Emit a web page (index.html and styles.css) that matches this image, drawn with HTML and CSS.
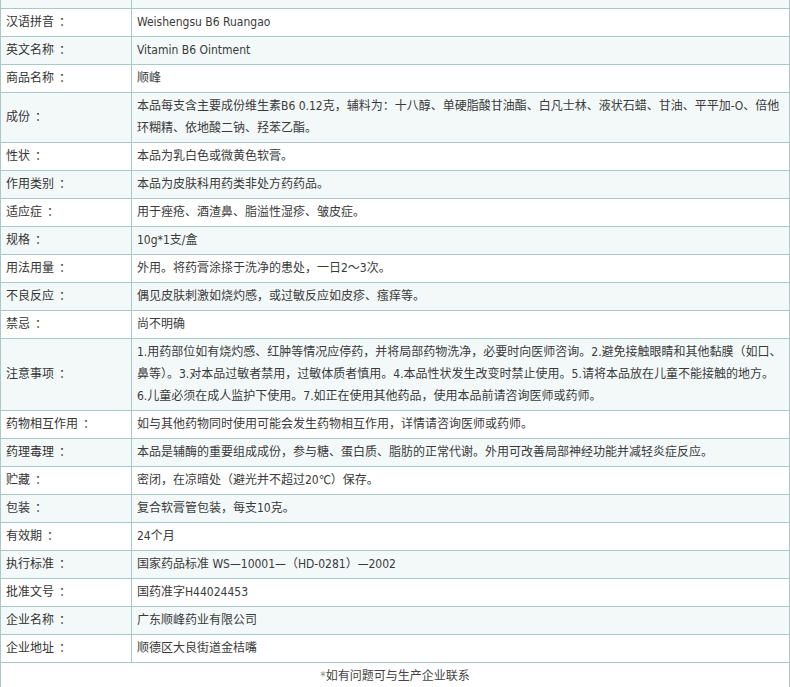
FILE: index.html
```html
<!DOCTYPE html>
<html lang="zh-CN">
<head>
<meta charset="utf-8">
<title>维生素B6软膏 说明书</title>
<link rel="stylesheet" href="styles.css">
</head>
<body>
<table class="spec">
  <colgroup><col class="col-label"><col class="col-value"></colgroup>
  <tbody>
    <tr class="alt"><td class="label">通用名称<span class="colon">：</span></td><td class="value">维生素B6软膏</td></tr>
    <tr><td class="label">汉语拼音<span class="colon">：</span></td><td class="value">Weishengsu B6 Ruangao</td></tr>
    <tr class="alt"><td class="label">英文名称<span class="colon">：</span></td><td class="value">Vitamin B6 Ointment</td></tr>
    <tr><td class="label">商品名称<span class="colon">：</span></td><td class="value">顺峰</td></tr>
    <tr class="alt"><td class="label">成份<span class="colon">：</span></td><td class="value">本品每支含主要成份维生素B6 0.12克，辅料为：十八醇、单硬脂酸甘油酯、白凡士林、液状石蜡、甘油、平平加-O、倍他<br>环糊精、依地酸二钠、羟苯乙酯。</td></tr>
    <tr><td class="label">性状<span class="colon">：</span></td><td class="value">本品为乳白色或微黄色软膏。</td></tr>
    <tr class="alt"><td class="label">作用类别<span class="colon">：</span></td><td class="value">本品为皮肤科用药类非处方药药品。</td></tr>
    <tr><td class="label">适应症<span class="colon">：</span></td><td class="value">用于痤疮、酒渣鼻、脂溢性湿疹、皱皮症。</td></tr>
    <tr class="alt"><td class="label">规格<span class="colon">：</span></td><td class="value">10g*1支/盒</td></tr>
    <tr><td class="label">用法用量<span class="colon">：</span></td><td class="value">外用。将药膏涂搽于洗净的患处，一日2～3次。</td></tr>
    <tr class="alt"><td class="label">不良反应<span class="colon">：</span></td><td class="value">偶见皮肤刺激如烧灼感，或过敏反应如皮疹、瘙痒等。</td></tr>
    <tr><td class="label">禁忌<span class="colon">：</span></td><td class="value">尚不明确</td></tr>
    <tr class="alt"><td class="label">注意事项<span class="colon">：</span></td><td class="value">1.用药部位如有烧灼感、红肿等情况应停药，并将局部药物洗净，必要时向医师咨询。2.避免接触眼睛和其他黏膜（如口、<br>鼻等）。3.对本品过敏者禁用，过敏体质者慎用。4.本品性状发生改变时禁止使用。5.请将本品放在儿童不能接触的地方。<br>6.儿童必须在成人监护下使用。7.如正在使用其他药品，使用本品前请咨询医师或药师。</td></tr>
    <tr><td class="label">药物相互作用<span class="colon">：</span></td><td class="value">如与其他药物同时使用可能会发生药物相互作用，详情请咨询医师或药师。</td></tr>
    <tr class="alt"><td class="label">药理毒理<span class="colon">：</span></td><td class="value">本品是辅酶的重要组成成份，参与糖、蛋白质、脂肪的正常代谢。外用可改善局部神经功能并减轻炎症反应。</td></tr>
    <tr><td class="label">贮藏<span class="colon">：</span></td><td class="value">密闭，在凉暗处（避光并不超过20℃）保存。</td></tr>
    <tr class="alt"><td class="label">包装<span class="colon">：</span></td><td class="value">复合软膏管包装，每支10克。</td></tr>
    <tr><td class="label">有效期<span class="colon">：</span></td><td class="value">24个月</td></tr>
    <tr class="alt"><td class="label">执行标准<span class="colon">：</span></td><td class="value">国家药品标准 WS—10001—（HD-0281）—2002</td></tr>
    <tr><td class="label">批准文号<span class="colon">：</span></td><td class="value">国药准字H44024453</td></tr>
    <tr class="alt"><td class="label">企业名称<span class="colon">：</span></td><td class="value">广东顺峰药业有限公司</td></tr>
    <tr><td class="label">企业地址<span class="colon">：</span></td><td class="value">顺德区大良街道金桔嘴</td></tr>
    <tr class="footer"><td colspan="2" class="note"><span class="star">*</span>如有问题可与生产企业联系</td></tr>
  </tbody>
</table>
</body>
</html>
```
FILE: styles.css
```css
html, body {
  margin: 0;
  padding: 0;
  background: #ffffff;
}

body {
  font-family: "DejaVu Sans Condensed", "DejaVu Sans", "Noto Sans CJK SC", sans-serif;
  font-stretch: condensed;
  font-size: 12px;
  color: #3a3a3a;
}

.spec {
  width: 790px;
  margin-top: -20px;
  border-collapse: collapse;
  table-layout: fixed;
}

.col-label {
  width: 131px;
}

.spec td {
  border: 1px solid #a9c8ca;
  height: 22px;
  padding: 2px 5px 3px 5px;
  line-height: 22px;
  vertical-align: middle;
  text-align: left;
}

.spec tr.alt td {
  background: #f3f9f9;
}

.label {
  color: #333;
}

.colon {
  margin-left: 5px;
}

.spec .note {
  text-align: center;
  color: #444;
}

.star {
  color: #888;
}
```
